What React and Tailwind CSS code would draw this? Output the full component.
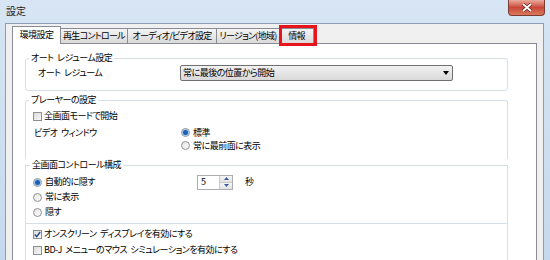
import React from 'react';

function Radio({ checked }) {
  return (
    <span className="w-[9px] h-[9px] rounded-full border border-[#8e8f8f] bg-gradient-to-br from-[#e6e6e6] to-[#fbfbfb] flex items-center justify-center shrink-0">
      {checked && <span className="w-[5px] h-[5px] rounded-full bg-[#1f5fb0] ring-1 ring-[#9ec3ea]"></span>}
    </span>
  );
}

function Check({ checked }) {
  return (
    <span className="w-[9px] h-[9px] border border-[#8e8f8f] bg-gradient-to-br from-[#dcdcdc] to-[#f8f8f8] flex items-center justify-center shrink-0">
      {checked && (
        <svg width="7" height="7" viewBox="0 0 7 7">
          <path d="M0.8 3.6 L2.7 5.6 L6.2 1" fill="none" stroke="#2c4a8f" strokeWidth="1.5" />
        </svg>
      )}
    </span>
  );
}

function Tab({ label, active, className }) {
  if (active) {
    return (
      <div className={`relative z-10 h-[18px] border border-b-0 border-[#898c95] bg-white flex items-center justify-center pb-[1px] whitespace-nowrap ${className}`}>
        {label}
      </div>
    );
  }
  return (
    <div className={`-ml-[1px] h-[15px] mb-[1px] border border-b-0 border-[#898c95] bg-gradient-to-b from-[#f4f4f4] to-[#dadada] flex items-center justify-center whitespace-nowrap tracking-[-0.7px] ${className}`}>
      {label}
    </div>
  );
}

export default function App() {
  return (
    <div className="w-[550px] h-[260px] overflow-hidden flex flex-col bg-gradient-to-b from-[#d7e5f4] to-[#c5d9ee] text-[9px] leading-[12px] tracking-[-0.5px] [word-spacing:2px] text-black font-['Noto_Sans_CJK_JP',sans-serif] [font-feature-settings:'palt']">
      {/* title bar */}
      <div className="h-[23px] flex justify-between shrink-0">
        <span className="pl-[6px] pt-[5px] text-[10px] tracking-normal text-[#1e1e1e]">設定</span>
        <div className="mr-[5px] w-[37px] h-[16px] rounded-b-[4px] border border-t-0 border-[#7d3a33] bg-gradient-to-b from-[#e9a99b] via-[#c9463a] to-[#d9785b] flex items-center justify-center">
          <svg width="12" height="9" viewBox="0 0 12 9">
            <path d="M2 1 L10 8 M10 1 L2 8" stroke="#5a1d18" strokeWidth="3.2" />
            <path d="M2 1 L10 8 M10 1 L2 8" stroke="#ffffff" strokeWidth="1.8" />
          </svg>
        </div>
      </div>

      {/* client area */}
      <div className="flex-1 ml-[5px] mr-[6px] border border-b-0 border-[#8b9cb3] bg-[#f0f0f0] pl-[6px] pr-[6px] pt-[2px] flex flex-col">
        <div className="flex items-end h-[18px] -mb-[1px]">
          <Tab label="環境設定" active className="w-[49px]" />
          <Tab label="再生コントロール" className="w-[68px]" />
          <Tab label="オーディオ/ビデオ設定" className="w-[90px]" />
          <Tab label="リージョン(地域)" className="w-[64px]" />
          <div className="relative">
            <Tab label="情報" className="w-[35px]" />
            <div className="absolute -left-[1px] -top-[3px] w-[38px] h-[21px] border-[3px] border-[#e8141c]"></div>
          </div>
        </div>

        <div className="flex-1 bg-white border border-b-0 border-[#898c95] pl-[12px] pr-[28px] pt-[8px]">
          {/* オート レジューム設定 */}
          <fieldset className="border border-[#d5dfe5] rounded-[3px]">
            <legend className="ml-[3px] px-[2px] leading-[12px]">オート レジューム設定</legend>
            <div className="flex items-center pl-[12px] pt-[1px] pb-[9px]">
              <span className="w-[142px]">オート レジューム</span>
              <div className="w-[273px] h-[16px] border border-[#707070] rounded-[2px] bg-gradient-to-b from-[#f2f2f2] to-[#d9d9d9] flex items-center justify-between pl-[2px] pr-[3px]">
                <span>常に最後の位置から開始</span>
                <svg width="6" height="4" viewBox="0 0 6 4">
                  <path d="M0 0 L6 0 L3 4 Z" fill="#000" />
                </svg>
              </div>
            </div>
          </fieldset>

          {/* プレーヤーの設定 */}
          <fieldset className="mt-[3px] border border-b-0 border-[#d5dfe5] rounded-t-[3px]">
            <legend className="ml-[3px] px-[2px] leading-[12px]">プレーヤーの設定</legend>
            <div className="pl-[7px] pt-[3px] pb-[7px]">
              <div className="h-[14px] flex items-center gap-[2px]">
                <Check />
                <span>全画面モードで開始</span>
              </div>
              <div className="mt-[3px] flex">
                <span className="w-[147px] ml-[1px] h-[13px] flex items-center">ビデオ ウィンドウ</span>
                <div className="flex flex-col">
                  <div className="h-[13px] flex items-center gap-[3px]">
                    <Radio checked />
                    <span>標準</span>
                  </div>
                  <div className="h-[13px] flex items-center gap-[3px]">
                    <Radio />
                    <span>常に最前面に表示</span>
                  </div>
                </div>
              </div>
            </div>
          </fieldset>

          {/* 全画面コントロール構成 */}
          <fieldset className="border border-[#d5dfe5]">
            <legend className="ml-[4px] px-[2px] leading-[12px]">全画面コントロール構成</legend>
            <div className="pl-[7px] pt-[3px] pb-[4px]">
              <div className="h-[16px] flex items-center">
                <div className="w-[164px] flex items-center gap-[3px]">
                  <Radio checked />
                  <span>自動的に隠す</span>
                </div>
                <div className="w-[36px] h-[15px] border border-[#abadb3] flex">
                  <span className="flex-1 pl-[3px] flex items-center">5</span>
                  <div className="w-[13px] flex flex-col border-l border-[#c9c9c9]">
                    <div className="flex-1 bg-gradient-to-b from-[#f6f6f6] to-[#e2e2e2] border-b border-[#c9c9c9] flex items-center justify-center">
                      <svg width="5" height="3" viewBox="0 0 5 3"><path d="M0 3 L5 3 L2.5 0 Z" fill="#3a5fa0" /></svg>
                    </div>
                    <div className="flex-1 bg-gradient-to-b from-[#f6f6f6] to-[#e2e2e2] flex items-center justify-center">
                      <svg width="5" height="3" viewBox="0 0 5 3"><path d="M0 0 L5 0 L2.5 3 Z" fill="#3a5fa0" /></svg>
                    </div>
                  </div>
                </div>
                <span className="ml-[12px]">秒</span>
              </div>
              <div className="h-[14px] flex items-center gap-[3px]">
                <Radio />
                <span>常に表示</span>
              </div>
              <div className="mt-[1px] h-[14px] flex items-center gap-[3px]">
                <Radio />
                <span>隠す</span>
              </div>
            </div>
          </fieldset>

          <div className="border-x border-[#d5dfe5] pl-[7px] pt-[3px] h-[60px]">
            <div className="h-[14px] flex items-center gap-[2px]">
              <Check checked />
              <span>オンスクリーン ディスプレイを有効にする</span>
            </div>
            <div className="mt-[2px] h-[14px] flex items-center gap-[2px]">
              <Check />
              <span>BD-J メニューのマウス シミュレーションを有効にする</span>
            </div>
          </div>
        </div>
      </div>
    </div>
  );
}
